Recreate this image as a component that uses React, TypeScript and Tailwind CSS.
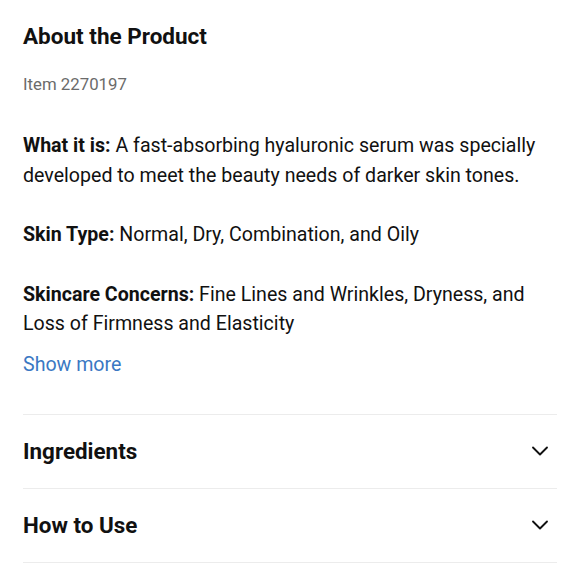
import { ChevronDown } from 'lucide-react';

function Section({ title }: { title: string }) {
  return (
    <button className="w-full h-[74px] flex items-center justify-between border-b border-[#ececec] text-left">
      <span className="text-[22.4px] leading-[28px] font-bold text-[#111]">{title}</span>
      <ChevronDown className="w-[28px] h-[28px] mr-[3px] text-[#111]" strokeWidth={1.6} />
    </button>
  );
}

export default function App() {
  return (
    <div className="w-[580px] h-[580px] bg-white px-[23px] pt-[22px] font-['Roboto',sans-serif] text-[#111] overflow-hidden">
      <h2 className="text-[22.5px] leading-[28px] font-bold">About the Product</h2>
      <p className="mt-[22px] text-[16.8px] leading-[24px] text-[#6b6b6b]">Item 2270197</p>

      <div className="mt-[35px] flex flex-col gap-[30px] text-[19.6px] leading-[29.5px] w-[534px]">
        <p>
          <span className="font-bold">What it is:</span> A fast-absorbing hyaluronic serum was specially developed to meet the beauty needs of darker skin tones.
        </p>
        <p>
          <span className="font-bold">Skin Type:</span> Normal, Dry, Combination, and Oily
        </p>
        <p>
          <span className="font-bold">Skincare Concerns:</span> Fine Lines and Wrinkles, Dryness, and Loss of Firmness and Elasticity
        </p>
      </div>

      <button className="mt-[11px] text-[19.6px] leading-[30px] text-[#3a78c3]">Show more</button>

      <div className="mt-[34px] border-t border-[#ececec] w-[534px]">
        <Section title="Ingredients" />
        <Section title="How to Use" />
      </div>
    </div>
  );
}
